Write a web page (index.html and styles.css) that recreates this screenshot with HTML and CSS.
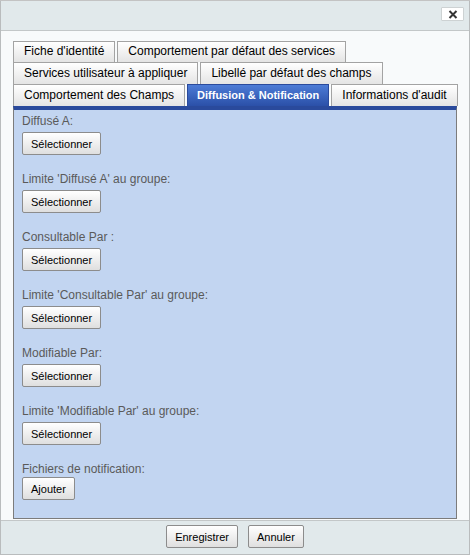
FILE: index.html
```html
<!DOCTYPE html>
<html lang="fr">
<head>
<meta charset="utf-8">
<link rel="stylesheet" href="styles.css">
</head>
<body>
<div class="dialog">
  <div class="titlebar">
    <button class="close" aria-label="Fermer"><svg width="10" height="9" viewBox="0 0 10 9"><path d="M1.5 1 L8.5 8 M8.5 1 L1.5 8" stroke="#333" stroke-width="2" fill="none"/></svg></button>
  </div>
  <div class="content">
    <div class="tabs">
      <div class="tabrow">
        <div class="tab">Fiche d'identité</div>
        <div class="tab">Comportement par défaut des services</div>
      </div>
      <div class="tabrow">
        <div class="tab">Services utilisateur à appliquer</div>
        <div class="tab">Libellé par défaut des champs</div>
      </div>
      <div class="tabrow">
        <div class="tab">Comportement des Champs</div>
        <div class="tab active">Diffusion &amp; Notification</div>
        <div class="tab">Informations d'audit</div>
      </div>
    </div>
    <div class="panel">
      <div class="group"><div class="label">Diffusé A:</div><button class="btn">Sélectionner</button></div>
      <div class="group"><div class="label">Limite 'Diffusé A' au groupe:</div><button class="btn">Sélectionner</button></div>
      <div class="group"><div class="label">Consultable Par :</div><button class="btn">Sélectionner</button></div>
      <div class="group"><div class="label">Limite 'Consultable Par' au groupe:</div><button class="btn">Sélectionner</button></div>
      <div class="group"><div class="label">Modifiable Par:</div><button class="btn">Sélectionner</button></div>
      <div class="group"><div class="label">Limite 'Modifiable Par' au groupe:</div><button class="btn">Sélectionner</button></div>
      <div class="group last"><div class="label">Fichiers de notification:</div><button class="btn">Ajouter</button></div>
    </div>
  </div>
  <div class="footer">
    <button class="btn">Enregistrer</button>
    <button class="btn">Annuler</button>
  </div>
</div>
</body>
</html>
```

FILE: styles.css
```css
* { box-sizing: border-box; }
html, body { margin: 0; padding: 0; }
body {
  background: #c3c3c3;
  font-family: "Liberation Sans", Arial, sans-serif;
  font-size: 12px;
  width: 470px;
  height: 555px;
  overflow: hidden;
}
.dialog {
  margin-top: 1px;
  width: 470px;
  height: 554px;
  border: 1px solid #b9bcbd;
  border-top: none;
  display: flex;
  flex-direction: column;
  background: #f8fafb;
}
.titlebar {
  height: 30px;
  background: #e1e9eb;
  border-bottom: 1px solid #c3c7c8;
  display: flex;
  justify-content: flex-end;
  align-items: flex-start;
  padding: 6px 5px 0 0;
}
.close {
  width: 23px;
  height: 14px;
  background: #fff;
  border: 1px solid #cdd2d3;
  border-radius: 1px;
  padding: 0;
  display: flex;
  align-items: center;
  justify-content: center;
}
.content {
  flex: 1;
  padding: 10px 12px 0 12px;
  display: flex;
  flex-direction: column;
}
.tabs { display: flex; flex-direction: column; }
.tabrow { display: flex; gap: 2px; }
.tab {
  height: 22px;
  line-height: 20px;
  padding: 0 10px;
  border: 1px solid #a3a3a3;
  border-bottom: none;
  background: linear-gradient(#ffffff, #e4e4e4);
  color: #000;
  white-space: nowrap;
}
.tabrow:first-child .tab { height: 21px; line-height: 19px; }
.tab.active {
  background: linear-gradient(#4c7bd6, #2b50a8);
  border-color: #2a4a9c;
  color: #fff;
  font-weight: bold;
  font-size: 11px;
  padding: 0 9px;
}
.panel {
  flex: 1;
  background: #c2d5f1;
  border: 1px solid #7c7c7c;
  border-top: 4px solid #2a4a9c;
  padding: 4px 8px 0 8px;
}
.group { margin-bottom: 17px; }
.group.last { margin-bottom: 0; }
.label {
  color: #5a5a5a;
  line-height: 14px;
  margin-bottom: 4px;
}
.group.last .label { margin-bottom: 1px; }
.btn {
  font-family: "Liberation Sans", Arial, sans-serif;
  font-size: 11px;
  color: #000;
  height: 23px;
  padding: 0 8px;
  border: 1px solid #8c8c8c;
  border-radius: 2px;
  background: linear-gradient(#ffffff, #dfdfdf);
  margin: 0;
}
.footer {
  height: 34px;
  margin-top: 1px;
  background: #e1e9eb;
  border-top: 1px solid #c3c7c8;
  display: flex;
  justify-content: center;
  gap: 10px;
  padding: 4px 0 0 0;
}
```
